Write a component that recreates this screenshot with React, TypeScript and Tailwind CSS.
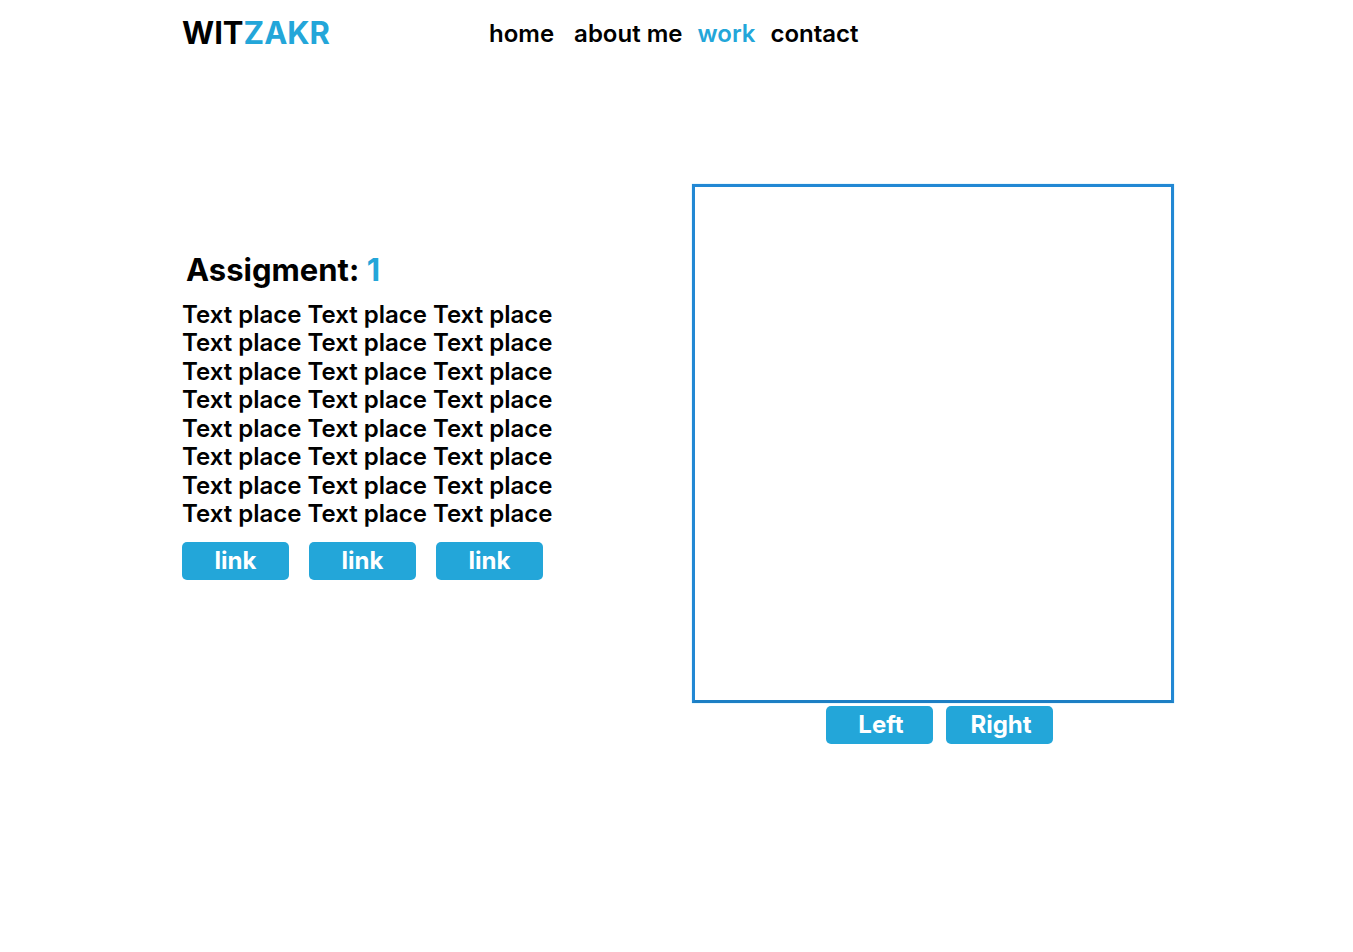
import React from "react";

const navItems = [
  { label: "home", className: "" },
  { label: "about me", className: "ml-5" },
  { label: "work", className: "ml-[15px] text-[#23a6d9]" },
  { label: "contact", className: "ml-[15px]" },
];
const lines = Array.from({ length: 8 }, () => "Text place Text place Text place");

export default function App() {
  return (
    <div className="min-h-screen bg-white pl-[182px] pr-[179px] font-['Inter',sans-serif] font-bold text-black">
      <header className="flex h-[66px] items-center">
        <a href="#" className="w-[307px] text-[31px] leading-10">
          WIT<span className="text-[#23a6d9]">ZAKR</span>
        </a>
        <nav className="flex pt-px text-2xl font-semibold">
          {navItems.map((item) => (
            <a key={item.label} href="#" className={item.className}>
              {item.label}
            </a>
          ))}
        </nav>
      </header>
      <main className="flex items-start justify-between pt-[118px]">
        <section className="pt-[66px]">
          <h1 className="pl-1 text-[31px] leading-10">
            Assigment: <span className="text-[#23a6d9]">1</span>
          </h1>
          <p className="mt-[11px] flex min-h-[227px] flex-col justify-between text-2xl leading-[28px] font-semibold">
            {lines.map((line, i) => (
              <span key={i}>{line}</span>
            ))}
          </p>
          <div className="flex gap-5 pt-[14px]">
            {[1, 2, 3].map((n) => (
              <a key={n} href="#" className="flex h-[38px] w-[107px] items-center justify-center rounded-[5px] bg-[#23a6d9] pb-px text-2xl text-white">
                link
              </a>
            ))}
          </div>
        </section>
        <section className="w-[482px]">
          <div className="h-[519px] border-3 border-[#2288d4] border-b-[#1c7fc4] shadow-[0_0_1px_#7fd4ff]" />
          <div className="flex justify-center gap-[13px] pt-[3px] pl-3">
            {["Left", "Right"].map((label) => (
              <button key={label} type="button" className="h-[38px] w-[107px] rounded-[5px] bg-[#23a6d9] pb-px pl-1 text-2xl text-white">
                {label}
              </button>
            ))}
          </div>
        </section>
      </main>
    </div>
  );
}
